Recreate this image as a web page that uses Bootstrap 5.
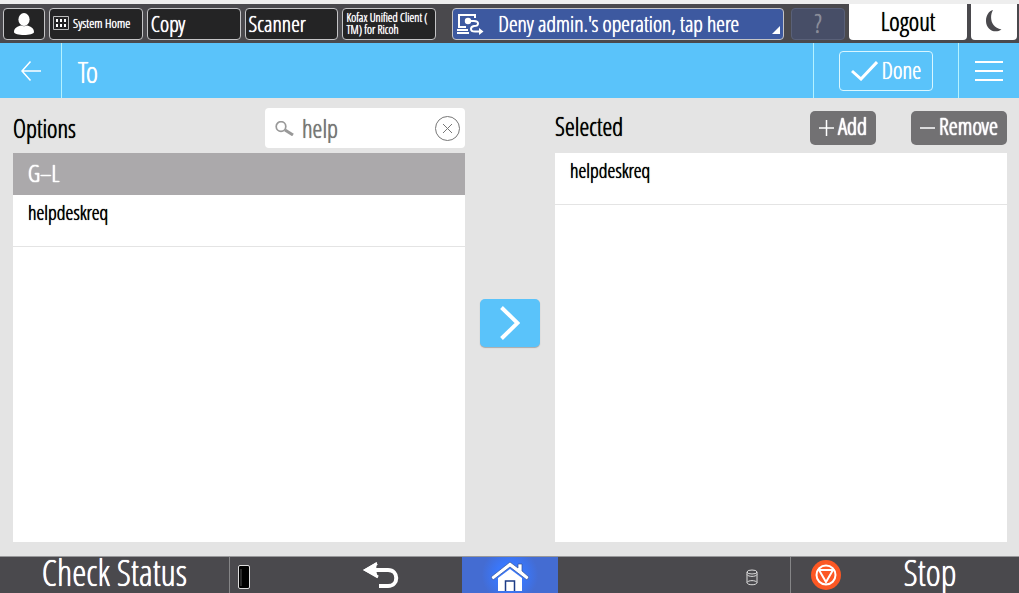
<!DOCTYPE html>
<html lang="en">
<head>
<meta charset="utf-8">
<meta name="viewport" content="width=device-width, initial-scale=1">
<title>To</title>
<link href="https://cdn.jsdelivr.net/npm/bootstrap@5.3.0/dist/css/bootstrap.min.css" rel="stylesheet">
<style>
body { font-family: "Open Sans Condensed Light", "Open Sans Condensed", "Roboto Condensed", sans-serif; background: #e4e4e4; color: #000; line-height: 1.2; text-shadow: 0 0 0 currentColor, 0 0 1px currentColor; }
button, input { font-family: inherit; text-shadow: inherit; }
svg { display: block; flex: none; }
.system-bar { background: #4a494d; border-top: 4px solid #eee; height: 43px; padding: 0 2px 0 3px; }
.key { height: 32px; padding: 0 3px 2px; border: 1px solid #c4c4c6; border-radius: 4px; background: #242425; color: #fff; font-size: 22px; line-height: 1; text-align: left; white-space: nowrap; flex: 1 1 93px; min-width: 0; }
.key-user { flex: 0 0 42px; padding-bottom: 0; }
.key-small { font-size: 13px; }
.key-app { font-size: 12px; padding-bottom: 0; }
.key-notice { flex: 1 1 331px; background: #3d59a0; margin: 0 3px 0 12px; gap: 14px; position: relative; }
.key-notice::after { content: ""; position: absolute; right: 3px; bottom: 5px; border: 4px solid #fff; border-top-color: transparent; border-left-color: transparent; }
.key-help { flex: 0 0 54px; background: #474e67; border-color: #596078; color: #8a8d99; font-size: 25px; text-align: center; }
.key-light { height: 36px; border: 0; border-radius: 0 0 4px 4px; background: #fff; color: #000; text-align: center; font-size: 25px; flex: 0 0 118px; }
.key-night { flex-basis: 46px; }
.title-bar { background: #5ac3fa; color: #fff; height: 55px; }
.cell { border: 0 solid #b4f2ff; }
.title-bar button { background: none; color: #fff; }
.page-title { font-size: 29px; padding-left: 16px; }
.back { width: 62px; border-right-width: 1px; }
.done-cell { width: 145px; border-left-width: 1px; }
.done { width: 94px; height: 40px; margin-left: 25px; border: 1px solid #d8f6ff; border-radius: 4px; font-size: 23px; }
.menu { width: 61px; border-left-width: 1px; }
.chooser { padding: 10px 12px 14px 13px; min-height: 0; }
.pane-head { height: 45px; padding-bottom: 5px; }
.pane-title { font-size: 25px; }
.pane-body { background: #fff; }
.find { width: 200px; height: 40px; background: #fff; border-radius: 4px; padding: 0 5px 0 10px; }
.find input { font-size: 25px; color: #777; background: none; min-width: 0; }
.group { background: #aba9ab; color: #fff; height: 42px; padding-left: 15px; font-size: 23px; }
.group, .act { text-shadow: 0 0 1px currentColor, 0 0 1px currentColor, 0 0 1px currentColor; }
.entry { height: 52px; padding: 6px 15px; border-bottom: 1px solid #e4e4e4; font-size: 20px; }
.act { height: 34px; background: #727173; color: #fff; border-radius: 5px; font-size: 23px; line-height: 1; }
.act-group { gap: 35px; }
.act-add { width: 66px; }
.act-remove { width: 96px; }
.mover { width: 90px; }
.move { width: 60px; height: 48px; background: #5ac3fa; border-radius: 5px; box-shadow: 0 1px 1px #aaa; margin-bottom: 4px; }
.status-bar { background: #4a494d; border-top: 1px solid #98989a; height: 37px; color: #fff; }
.status-bar button { background: none; color: #fff; font-size: 36px; line-height: 32px; white-space: nowrap; }
.status-bar .home { background: radial-gradient(circle, #3977fc 25%, #446cd2 55%); }
.rule { border-color: #858587 !important; }
.check { flex: 1 1 230px; }
.return { flex: 1 1 232px; }
.home { flex: 1 1 96px; }
.store { flex: 1 1 233px; }
.halt { flex: 1 1 228px; padding: 0 0 0 20px; }
.caption { padding-bottom: 4px; }
</style>
</head>
<body class="d-flex flex-column vh-100 overflow-hidden">
<nav class="system-bar d-flex align-items-start flex-shrink-0 gap-1" aria-label="System">
    <button class="key key-user mt-1 d-flex align-items-center justify-content-center" aria-label="User">
      <svg width="22" height="24" viewBox="0 0 22 24" fill="#fff"><ellipse cx="11" cy="7.500" rx="5.600" ry="6.500"/><path d="M1 20c0-4 4-6 7-6.500q3 1.500 6 0c3 .5 7 2.500 7 6.500 0 4-20 4-20 0Z"/></svg>
    </button>
    <button class="key key-small mt-1 d-flex align-items-center gap-1">
      <svg width="16" height="14" viewBox="0 0 16 14"><path d="M.5.5h15v13H.5Z" fill="none" stroke="#bbb"/><path d="M3 3h2v3H3Zm4 0h2v3H7Zm4 0h2v3h-2ZM3 8h2v3H3Zm4 0h2v3H7Zm4 0h2v3h-2Z" fill="#fff"/></svg>
      System Home</button>
    <button class="key mt-1">Copy</button>
    <button class="key mt-1">Scanner</button>
    <button class="key key-app mt-1">Kofax Unified Client (<br>TM) for Ricoh</button>
    <button class="key key-notice mt-1 d-flex align-items-center">
      <svg width="28" height="24" viewBox="0 0 28 24" fill="none" stroke="#fff" stroke-width="2"><path d="M10 16H3V4h16v3M1 19h11M1 22h12"/><circle cx="12" cy="10" r="2.200" fill="#fff"/><path d="M12 10h6q4 0 4 2.500T18 15q-3 .5-3 3t4 2.500h4"/><path d="m23 17 4.500 3.500L23 24Z" fill="#fff" stroke="none"/></svg>
      Deny admin.'s operation, tap here</button>
    <button class="key key-help mt-1">?</button>
    <button class="key key-light">Logout</button>
    <button class="key key-light key-night d-flex align-items-center justify-content-center" aria-label="Sleep">
      <svg width="16" height="22" viewBox="0 0 16 22"><path d="M7 0C3 7 5 18 15.500 19.500 9 24 0 20 0 11 0 5 3 1 7 0Z" fill="#4a494d"/></svg>
    </button>
</nav>
<header class="title-bar d-flex align-items-stretch flex-shrink-0">
  <button class="cell back d-flex align-items-center justify-content-center p-0" aria-label="Back">
    <svg width="20" height="20" viewBox="0 0 20 20" fill="none" stroke="#fff" stroke-width="1.500"><path d="M20 10H1M9.500.5 1 10l8.500 9.500"/></svg>
  </button>
  <h1 class="page-title fw-normal m-0 pt-1 flex-fill align-self-center">To</h1>
  <div class="cell done-cell d-flex align-items-center">
    <button class="done d-flex align-items-center justify-content-center gap-1 p-0">
      <svg width="27" height="20" viewBox="0 0 27 20" fill="none" stroke="#fff" stroke-width="3"><path d="m1 10 9 8L26 1"/></svg>Done</button>
  </div>
  <button class="cell menu d-flex align-items-center justify-content-center p-0" aria-label="Menu">
    <svg width="28" height="20" viewBox="0 0 28 20" stroke="#fff" stroke-width="2"><path d="M0 1h28M0 10h28M0 19h28"/></svg>
  </button>
</header>
<main class="chooser d-flex flex-fill">
  <section class="d-flex flex-column flex-fill w-50">
    <div class="pane-head d-flex align-items-center justify-content-between">
      <label class="pane-title" for="find">Options</label>
      <div class="find d-flex align-items-center">
        <svg width="19" height="15" viewBox="0 0 19 15" fill="none" stroke="#999"><circle cx="6" cy="5.500" r="4.800" stroke-width="1.700"/><path d="m10 9 8 5" stroke-width="3"/></svg>
        <input id="find" class="border-0 py-0 pe-2 ps-1 ms-1 flex-fill" type="text" value="help">
        <button class="border-0 bg-transparent p-0" aria-label="Clear"><svg width="25" height="25" viewBox="0 0 25 25" fill="none" stroke="#777"><circle cx="12.500" cy="12.500" r="12"/><path d="m8 8 9 9m0-9-9 9"/></svg></button>
      </div>
    </div>
    <div class="pane-body flex-fill">
      <div class="group d-flex align-items-center">G–L</div>
      <div class="entry">helpdeskreq</div>
    </div>
  </section>
  <div class="mover d-flex flex-shrink-0 align-items-center justify-content-center">
    <button class="move border-0 p-0 d-flex align-items-center justify-content-center" aria-label="Add to selected">
      <svg width="20" height="34" viewBox="0 0 20 34" fill="none" stroke="#fff" stroke-width="4"><path d="m1.500 1.500 16 15.500-16 15.500"/></svg>
    </button>
  </div>
  <section class="d-flex flex-column flex-fill w-50">
    <div class="pane-head d-flex align-items-center justify-content-between">
      <h2 class="pane-title fw-normal m-0 pb-1">Selected</h2>
      <div class="act-group d-flex">
        <button class="act act-add border-0 p-0 d-flex align-items-center justify-content-center gap-1"><svg width="15" height="16" viewBox="0 0 15 16" stroke="#fff" stroke-width="1.500"><path d="M0 8h15M7.500 0v16"/></svg><span class="pb-1">Add</span></button>
        <button class="act act-remove border-0 p-0 d-flex align-items-center justify-content-center gap-1"><svg width="15" height="16" viewBox="0 0 15 16" stroke="#fff" stroke-width="1.500"><path d="M0 8h15"/></svg><span class="pb-1">Remove</span></button>
      </div>
    </div>
    <div class="pane-body flex-fill">
      <div class="entry">helpdeskreq</div>
    </div>
  </section>
</main>
<footer class="status-bar d-flex align-items-stretch flex-shrink-0">
  <button class="check rule border-0 border-end p-0"><span class="caption d-block">Check Status</span></button>
  <div class="return d-flex align-items-center">
    <svg class="ms-2 mt-1" width="12" height="24" viewBox="0 0 12 24"><rect x=".5" y=".5" width="11" height="23" rx="1.500" fill="#000" stroke="#ddd"/><path d="M3 4v17" stroke="#555"/></svg>
    <button class="border-0 p-0 flex-fill d-flex justify-content-center" aria-label="Return"><svg class="ms-5" width="37" height="28" viewBox="0 0 37 28" fill="none" stroke="#fff" stroke-width="4"><path d="M5 9h21c11 0 11 16 0 16h-9"/><path d="M15 1 1 9l15 8-2-8Z" fill="#fff" stroke="none"/><path d="M15 2.500 4 9l12 7" stroke-width="3"/></svg></button>
  </div>
  <button class="home border-0 p-0 d-flex align-items-end justify-content-center" aria-label="Home">
    <svg width="38" height="32" viewBox="0 0 38 32"><path d="M0 16 19 1l8 6V3h4v7l7 6-2 3L19 6 2 19Z" fill="#fff" stroke="#315296" stroke-width=".7"/><path d="M7 17 19 8l12 9v13H7Z" fill="#fff"/><path d="M14.500 30V20h9v10" fill="#fff" stroke="#1b3b86" stroke-width="1.500"/></svg>
  </button>
  <div class="store rule border-end d-flex align-items-center justify-content-end pe-3">
    <svg class="me-3 mt-1" width="12" height="17" viewBox="0 0 12 17" fill="none" stroke="#ddd"><ellipse cx="6" cy="3" rx="5" ry="2"/><path d="M1 3v10.500c0 3 10 3 10 0V3M1 13.500c1-2.500 9-2.500 10 0M1 5.500c1 2.500 9 2.500 10 0"/></svg>
  </div>
  <button class="halt border-0 d-flex align-items-center">
    <svg width="30" height="30" viewBox="0 0 30 30" fill="none" stroke="#fff" stroke-width="2"><circle cx="15" cy="15" r="15" fill="#fc5824" stroke="none"/><circle cx="15" cy="15" r="9.500"/><path d="M8 10h14l-7 12Z"/></svg>
    <span class="caption flex-fill">Stop</span></button>
</footer>
<script src="https://cdn.jsdelivr.net/npm/bootstrap@5.3.0/dist/js/bootstrap.bundle.min.js"></script>
</body>
</html>
